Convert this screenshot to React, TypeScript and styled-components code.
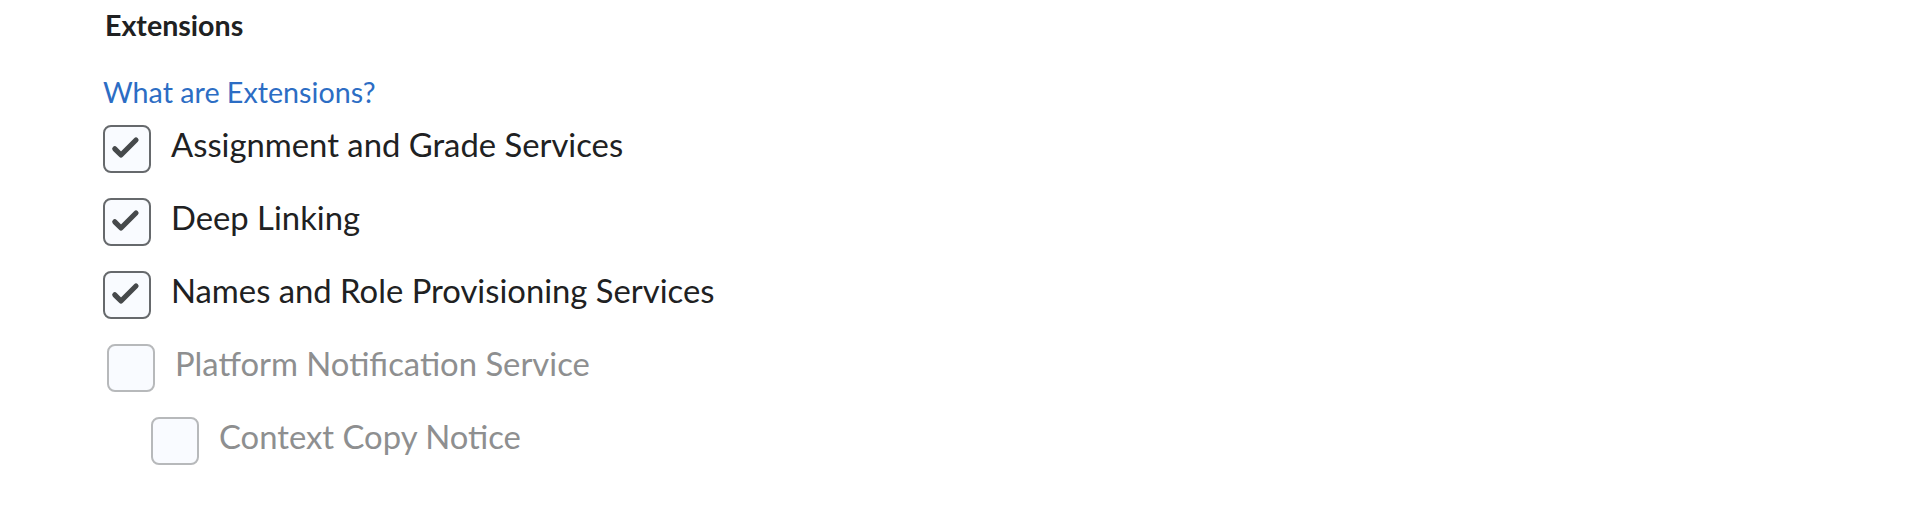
import React from "react";
import styled, { createGlobalStyle } from "styled-components";

const Global = createGlobalStyle`
  html, body { margin: 0; padding: 0; background: #ffffff; }
  body { font-family: Lato, "Noto Sans", sans-serif; }
`;

const Page = styled.div`
  padding: 8px 0 0 103px;
  display: flex;
  flex-direction: column;
`;

const Heading = styled.h2`
  margin: 0 0 0 2px;
  font-size: 28.6px;
  line-height: 35px;
  font-weight: 700;
  color: #202122;
`;

const HelpLink = styled.a`
  margin-top: 32px;
  font-size: 28.7px;
  line-height: 35px;
  color: #2c6dc4;
  text-decoration: none;
  cursor: pointer;
  align-self: flex-start;
`;

const List = styled.div`
  margin-top: 15px;
  display: flex;
  flex-direction: column;
  gap: 25px;
`;

const Row = styled.label<{ $indent: number; $disabled?: boolean }>`
  display: flex;
  align-items: flex-start;
  gap: 20px;
  height: 48px;
  padding-left: ${(p) => p.$indent}px;
  cursor: ${(p) => (p.$disabled ? "default" : "pointer")};
`;

const Box = styled.span<{ $disabled?: boolean }>`
  box-sizing: border-box;
  flex: 0 0 48px;
  width: 48px;
  height: 48px;
  border-radius: 8px;
  border: 2.5px solid ${(p) => (p.$disabled ? "#b7b9bb" : "#66696c")};
  background: #f9fbff;
  display: flex;
`;

const Label = styled.span<{ $disabled?: boolean }>`
  font-size: 32.8px;
  line-height: 40px;
  color: ${(p) => (p.$disabled ? "#8e8f90" : "#202122")};
  white-space: nowrap;
`;

const Check = () => (
  <svg width="43" height="43" viewBox="0 0 43 43" fill="none">
    <path
      d="M9.8 21.8 L16 28 L31 13"
      stroke="#46494b"
      strokeWidth="5.2"
      strokeLinecap="round"
      strokeLinejoin="round"
    />
  </svg>
);

type Item = { label: string; checked: boolean; disabled?: boolean; indent: number };

const items: Item[] = [
  { label: "Assignment and Grade Services", checked: true, indent: 0 },
  { label: "Deep Linking", checked: true, indent: 0 },
  { label: "Names and Role Provisioning Services", checked: true, indent: 0 },
  { label: "Platform Notification Service", checked: false, disabled: true, indent: 4 },
  { label: "Context Copy Notice", checked: false, disabled: true, indent: 48 },
];

export default function App() {
  return (
    <>
      <Global />
      <Page>
        <Heading>Extensions</Heading>
        <HelpLink>What are Extensions?</HelpLink>
        <List>
          {items.map((it) => (
            <Row key={it.label} $indent={it.indent} $disabled={it.disabled}>
              <Box $disabled={it.disabled}>{it.checked && <Check />}</Box>
              <Label $disabled={it.disabled}>{it.label}</Label>
            </Row>
          ))}
        </List>
      </Page>
    </>
  );
}
